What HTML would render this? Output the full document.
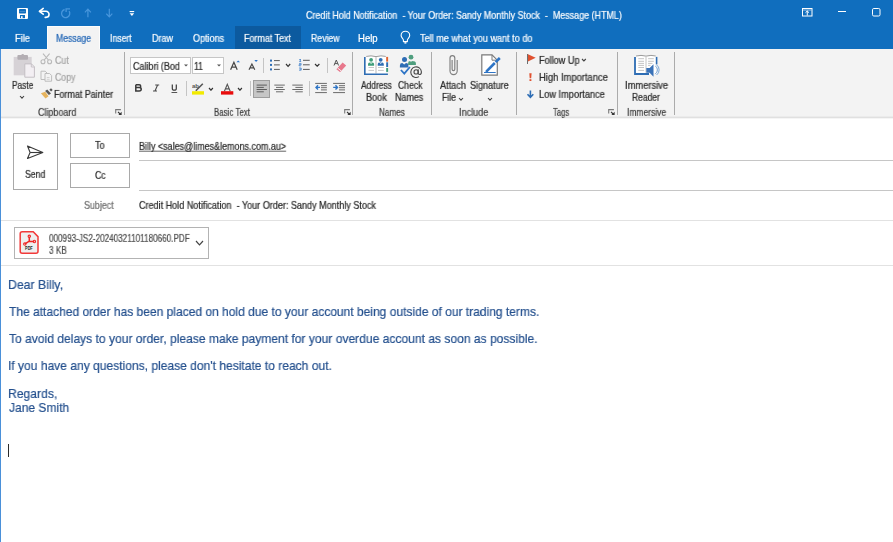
<!DOCTYPE html>
<html><head><meta charset="utf-8">
<style>
*{margin:0;padding:0;box-sizing:border-box}
html,body{width:893px;height:542px;overflow:hidden;background:#fff;font-family:"Liberation Sans",sans-serif}
.t{position:absolute;white-space:nowrap;line-height:1;transform-origin:0 0;will-change:transform;-webkit-text-stroke:0.2px currentColor}
.r{position:absolute;display:block}
</style></head><body>
<div class="r" style="left:0px;top:0px;width:893px;height:49px;background:#106ebe"></div>
<svg class="r" style="left:17px;top:8px" width="11" height="11" viewBox="0 0 11 11"><rect x="0" y="0" width="11" height="11" rx="1" fill="#fff"/><rect x="2" y="1" width="7" height="4.5" rx="0.8" fill="#106ebe"/><rect x="2.6" y="3" width="5.8" height="0.6" fill="#5a9ad6"/><rect x="3" y="7" width="5" height="3.2" fill="#106ebe"/><rect x="4" y="8.2" width="1.6" height="2" fill="#fff"/></svg>
<svg class="r" style="left:36px;top:5px" width="18" height="17" viewBox="0 0 18 17"><path d="M7.2 3.4L3.4 6.3L7.2 9.2" fill="none" stroke="#fff" stroke-width="1.6" stroke-linejoin="round" stroke-linecap="round"/><path d="M3.8 6.3H10A3.05 3.05 0 0 1 10 12.4H9.2" fill="none" stroke="#fff" stroke-width="1.6" stroke-linecap="round"/></svg>
<svg class="r" style="left:57px;top:5px" width="18" height="17" viewBox="0 0 18 17"><path d="M7.6 4.5A4.1 4.1 0 1 0 12.1 6.2" fill="none" stroke="#4896dc" stroke-width="1.3"/><path d="M9.1 7V3.9H13" fill="none" stroke="#4896dc" stroke-width="1.3"/></svg>
<svg class="r" style="left:84px;top:8px" width="8" height="10" viewBox="0 0 8 10"><path d="M3.9 9.2V1.3M0.9 4.3L3.9 1.2L6.9 4.3" fill="none" stroke="#4896dc" stroke-width="1.2"/></svg>
<svg class="r" style="left:106px;top:8px" width="8" height="10" viewBox="0 0 8 10"><path d="M3.3 0.8V8.7M0.3 5.7L3.3 8.8L6.3 5.7" fill="none" stroke="#4896dc" stroke-width="1.2"/></svg>
<svg class="r" style="left:129px;top:10px" width="6" height="7" viewBox="0 0 6 7"><rect x="0.6" y="1" width="4.6" height="1.1" fill="#fff"/><path d="M0.6 3.3H5.2L2.9 6.1Z" fill="#fff"/></svg>
<div class="t" style="left:306.30px;top:9.94px;font-size:9.5px;color:#fff;transform:scale(0.9405,1.07);">Credit Hold Notification&nbsp; - Your Order: Sandy Monthly Stock&nbsp; -&nbsp; Message (HTML)</div>
<svg class="r" style="left:801px;top:7px" width="12" height="10" viewBox="0 0 12 10"><rect x="1.5" y="1.5" width="9.5" height="7.5" fill="none" stroke="#fff" stroke-width="1"/><path d="M2 3H10.5" stroke="#cfe2f5" stroke-width="0.8"/><path d="M6.25 4V8.5M4.5 5.7L6.25 4L8 5.7" fill="none" stroke="#fff" stroke-width="1"/></svg>
<div class="r" style="left:838px;top:11px;width:8px;height:1px;background:#fff"></div>
<svg class="r" style="left:871px;top:7px" width="10" height="10" viewBox="0 0 10 10"><rect x="1.5" y="1.5" width="7.5" height="7.5" rx="1.3" fill="none" stroke="#fff" stroke-width="1"/></svg>
<div class="r" style="left:47px;top:26px;width:53px;height:23px;background:#f3f3f3;border:1px solid #fcfcfc;border-bottom:none"></div>
<div class="r" style="left:235px;top:26px;width:66px;height:23px;background:#0c5a9f"></div>
<div class="t" style="left:15.03px;top:32.94px;font-size:9.5px;color:#fff;transform:scale(0.9714,1.07);">File</div>
<div class="t" style="left:55.69px;top:32.94px;font-size:9.5px;color:#1c62b4;transform:scale(0.9081,1.07);">Message</div>
<div class="t" style="left:109.79px;top:32.94px;font-size:9.5px;color:#fff;transform:scale(0.9130,1.07);">Insert</div>
<div class="t" style="left:151.55px;top:32.94px;font-size:9.5px;color:#fff;transform:scale(0.9476,1.07);">Draw</div>
<div class="t" style="left:192.80px;top:32.94px;font-size:9.5px;color:#fff;transform:scale(0.9485,1.07);">Options</div>
<div class="t" style="left:243.96px;top:32.94px;font-size:9.5px;color:#fff;transform:scale(0.9408,1.07);">Format Text</div>
<div class="t" style="left:310.58px;top:32.94px;font-size:9.5px;color:#fff;transform:scale(0.9167,1.07);">Review</div>
<div class="t" style="left:358.49px;top:32.94px;font-size:9.5px;color:#fff;transform:scale(1.0056,1.07);">Help</div>
<svg class="r" style="left:396px;top:29px" width="18" height="17" viewBox="0 0 18 17"><path d="M7.4 12.6V11C7.4 9.6 5.1 8.7 5.1 6.5A4.3 4.3 0 0 1 13.7 6.5C13.7 8.7 11.4 9.6 11.4 11V12.6Z" fill="none" stroke="#fff" stroke-width="1.1" stroke-linejoin="round"/><rect x="8.4" y="13.2" width="2" height="1.4" fill="#fff"/></svg>
<div class="t" style="left:420.30px;top:32.94px;font-size:9.5px;color:#fff;transform:scale(0.9590,1.07);">Tell me what you want to do</div>
<div class="r" style="left:0px;top:49px;width:893px;height:67px;background:#f3f3f3"></div>
<div class="r" style="left:0px;top:116px;width:893px;height:1px;background:#ebebeb"></div>
<div class="r" style="left:0px;top:117px;width:893px;height:1px;background:#e0e0e0"></div>
<div class="r" style="left:0px;top:118px;width:893px;height:1px;background:#f5f5f5"></div>
<div class="r" style="left:0px;top:49px;width:1px;height:493px;background:#4a90d9"></div>
<div class="r" style="left:124px;top:52px;width:1px;height:63px;background:#ababab"></div>
<div class="r" style="left:352px;top:52px;width:1px;height:63px;background:#ababab"></div>
<div class="r" style="left:431px;top:52px;width:1px;height:63px;background:#ababab"></div>
<div class="r" style="left:516px;top:52px;width:1px;height:63px;background:#ababab"></div>
<div class="r" style="left:617px;top:52px;width:1px;height:63px;background:#ababab"></div>
<div class="r" style="left:674px;top:52px;width:1px;height:63px;background:#ababab"></div>
<svg class="r" style="left:12px;top:53px" width="24" height="26" viewBox="0 0 24 26"><rect x="1.7" y="3.9" width="18" height="18.4" fill="#d6d2d6"/><rect x="5.4" y="2" width="10.6" height="4.7" rx="1" fill="#b3aeb3"/><circle cx="10.7" cy="2.5" r="1.4" fill="#b3aeb3"/><path d="M12.8 10.9H19.5L22.4 13.8V24.2H12.8Z" fill="#f3eff3" stroke="#c4bfc4" stroke-width="1"/><path d="M19.3 10.9V14H22.4" fill="none" stroke="#c4bfc4" stroke-width="0.9"/></svg>
<div class="t" style="left:11.92px;top:79.94px;font-size:9.5px;color:#262626;transform:scale(0.8783,1.07);">Paste</div>
<svg class="r" style="left:19.2px;top:94.8px" width="6" height="4.2" viewBox="0 0 6 4.2"><path d="M1 1L3.0 3.2L5 1" fill="none" stroke="#444" stroke-width="1.1"/></svg>
<svg class="r" style="left:40px;top:53px" width="13" height="12" viewBox="0 0 13 12"><circle cx="3" cy="8.7" r="2" fill="none" stroke="#b9b9b9" stroke-width="1.1"/><circle cx="9.6" cy="8.7" r="2" fill="none" stroke="#b9b9b9" stroke-width="1.1"/><path d="M4.2 7L9.6 0.6M8.4 7L3 0.6" stroke="#b9b9b9" stroke-width="1.1"/></svg>
<div class="t" style="left:55.00px;top:54.94px;font-size:9.5px;color:#a3a3a3;transform:scale(0.9333,1.07);">Cut</div>
<svg class="r" style="left:40px;top:70px" width="13" height="12" viewBox="0 0 13 12"><path d="M1 1.2H5.2L7 3V9.5H1Z" fill="#f3f3f3" stroke="#bdbdbd" stroke-width="1"/><path d="M5 3.5H9.6L11.6 5.5V11.2H5Z" fill="#f3f3f3" stroke="#bdbdbd" stroke-width="1"/><path d="M6.8 7.5H9.6M6.8 9.3H9.6" stroke="#c9c9c9" stroke-width="0.8"/></svg>
<div class="t" style="left:55.00px;top:71.94px;font-size:9.5px;color:#a3a3a3;transform:scale(0.9182,1.07);">Copy</div>
<svg class="r" style="left:38px;top:85px" width="17" height="16" viewBox="0 0 17 16"><path d="M2.9 8.3L7.2 6.8L10.6 11.2L7.5 13.6Z" fill="#e6b45e"/><path d="M7.1 6.1L9.2 4.6L13 8.5L10.9 10Z" fill="#585858"/><path d="M11.4 4.7L13 3.3L14.7 5L13.1 6.6Z" fill="#555"/></svg>
<div class="t" style="left:54.06px;top:88.94px;font-size:9.5px;color:#262626;transform:scale(0.9403,1.07);">Format Painter</div>
<div class="t" style="left:37.60px;top:106.94px;font-size:9.5px;color:#3b3b3b;transform:scale(0.9400,1.07);">Clipboard</div>
<svg class="r" style="left:115px;top:108px" width="8" height="8" viewBox="0 0 8 8"><path d="M0.7 5.6V1.6H5.9" fill="none" stroke="#7a7a7a" stroke-width="1.1"/><path d="M3 3.9L5.6 6.5" stroke="#333" stroke-width="1.1"/><path d="M3.4 6.9H6.6V3.7Z" fill="#333"/></svg>
<div class="r" style="left:130px;top:57px;width:61px;height:17px;background:#fff;border:1px solid #c6c6c6"></div>
<div class="t" style="left:132.80px;top:60.94px;font-size:9.5px;color:#262626;transform:scale(0.9449,1.07);">Calibri (Bod</div>
<svg class="r" style="left:184px;top:64px" width="4" height="3" viewBox="0 0 4 3"><path d="M0 0.5H4L2 2.5Z" fill="#555"/></svg>
<div class="r" style="left:192px;top:57px;width:32px;height:17px;background:#fff;border:1px solid #c6c6c6"></div>
<div class="t" style="left:194.09px;top:60.94px;font-size:9.5px;color:#262626;transform:scale(0.9125,1.07);">11</div>
<svg class="r" style="left:217px;top:64px" width="4" height="3" viewBox="0 0 4 3"><path d="M0 0.5H4L2 2.5Z" fill="#555"/></svg>
<svg class="r" style="left:230px;top:59px" width="12" height="12" viewBox="0 0 12 12"><path d="M0.6 10.8L3.9 3.2L7.2 10.8M1.9 8.2H5.9" fill="none" stroke="#474747" stroke-width="1.25"/><path d="M6.4 3.2L8.2 1.5L10 3.2Z" fill="#2e75c6"/></svg>
<svg class="r" style="left:248px;top:59px" width="11" height="12" viewBox="0 0 11 12"><path d="M1 10.8L3.9 5L6.8 10.8M2 8.8H5.8" fill="none" stroke="#474747" stroke-width="1.15"/><path d="M6.3 1.1H9.9L8.1 2.9Z" fill="#2e75c6"/></svg>
<div class="r" style="left:263px;top:58px;width:1px;height:15px;background:#c4c4c4"></div>
<svg class="r" style="left:269px;top:59px" width="12" height="12" viewBox="0 0 12 12"><rect x="1" y="0.6" width="2" height="2" fill="#2e6db4"/><rect x="1" y="4.9" width="2" height="2" fill="#2e6db4"/><rect x="1" y="9.4" width="2" height="2" fill="#2e6db4"/><path d="M5 1.6H10.8M5 5.9H10.8M5 10.4H10.8" stroke="#5a5a5a" stroke-width="1"/></svg>
<svg class="r" style="left:285.2px;top:63.3px" width="6.2" height="4.3" viewBox="0 0 6.2 4.3"><path d="M1 1L3.1 3.3L5.2 1" fill="none" stroke="#333" stroke-width="1.2"/></svg>
<svg class="r" style="left:298px;top:58px" width="13" height="14" viewBox="0 0 13 14"><path d="M1.2 1.6H3M2.3 1.3V3.6M1.2 3.6H3.2M1 5.6H3.2V6.7H1V7.8H3.2M1 10H3.2V11.1H1.6M3.2 11.1V12.2H1" fill="none" stroke="#2e75c6" stroke-width="0.7"/><path d="M5 2.3H11.7M5 6.8H11.7M5 11.4H11.7" stroke="#5a5a5a" stroke-width="1"/></svg>
<svg class="r" style="left:314.3px;top:63.3px" width="6.4" height="4.2" viewBox="0 0 6.4 4.2"><path d="M1 1L3.2 3.2L5.4 1" fill="none" stroke="#333" stroke-width="1.2"/></svg>
<div class="r" style="left:327px;top:58px;width:1px;height:15px;background:#c4c4c4"></div>
<svg class="r" style="left:333px;top:59px" width="14" height="13" viewBox="0 0 14 13"><path d="M1 6.5L3.3 1L5.6 6.5M1.8 4.6H4.8" fill="none" stroke="#555" stroke-width="1"/><path d="M3.4 10.3L9.6 3.6L13.2 6.6L7.1 13.1Z" fill="#e8788c"/><path d="M4.6 9L8.3 12" stroke="#f3f3f3" stroke-width="1"/></svg>
<svg class="r" style="left:134px;top:84px" width="9" height="9" viewBox="0 0 9 9"><path d="M1.8 0.8H5.2C7.2 0.8 7.2 3.6 5.2 3.6H1.8M5.2 3.6C7.9 3.6 7.9 6.9 5.2 6.9H1.8V0.8" fill="none" stroke="#3a3a3a" stroke-width="1.5"/></svg>
<svg class="r" style="left:152px;top:84px" width="8" height="9" viewBox="0 0 8 9"><path d="M3.2 1H7.2M1 7H5M5.6 1L3 7" fill="none" stroke="#4a4a4a" stroke-width="1.1"/></svg>
<svg class="r" style="left:171px;top:84px" width="8" height="10" viewBox="0 0 8 10"><path d="M1.3 0.6V4.4C1.3 6.8 5.3 6.8 5.3 4.4V0.6" fill="none" stroke="#3a3a3a" stroke-width="1.2"/><path d="M0.5 8.5H6.2" stroke="#555" stroke-width="1"/></svg>
<div class="r" style="left:186px;top:81px;width:1px;height:15px;background:#c4c4c4"></div>
<svg class="r" style="left:192px;top:82px" width="13" height="13" viewBox="0 0 13 13"><text x="0" y="5.6" font-size="6" fill="#555" font-family="Liberation Sans" font-weight="bold">ab</text><path d="M3.8 8.8L10.8 1.8" stroke="#555" stroke-width="1.6"/><rect x="0" y="9.2" width="12" height="3.4" fill="#f2ea00"/></svg>
<svg class="r" style="left:208.2px;top:86.5px" width="5.9" height="4.2" viewBox="0 0 5.9 4.2"><path d="M1 1L2.95 3.2L4.9 1" fill="none" stroke="#333" stroke-width="1.2"/></svg>
<svg class="r" style="left:221px;top:83px" width="13" height="12" viewBox="0 0 13 12"><path d="M3.4 8.2L6.3 1.3L9.2 8.2M4.5 5.9H8.1" fill="none" stroke="#555" stroke-width="1.1"/><rect x="0" y="8.2" width="12.3" height="3.4" fill="#e80c0c"/></svg>
<svg class="r" style="left:237.4px;top:86.5px" width="5.9" height="4.2" viewBox="0 0 5.9 4.2"><path d="M1 1L2.95 3.2L4.9 1" fill="none" stroke="#333" stroke-width="1.2"/></svg>
<div class="r" style="left:250px;top:81px;width:1px;height:15px;background:#c4c4c4"></div>
<div class="r" style="left:253px;top:80px;width:17px;height:18px;background:#c6c6c6;border:1px solid #9d9d9d"></div>
<svg class="r" style="left:256px;top:84px" width="12" height="9" viewBox="0 0 12 9"><path d="M0.6 1.1H10.9M0.6 3.4H7.8M0.6 5.5H10.9M0.6 7.8H7.8" stroke="#5c5c5c" stroke-width="1"/></svg>
<svg class="r" style="left:274px;top:84px" width="12" height="9" viewBox="0 0 12 9"><path d="M0.3 1.1H10.8M2 3.4H9.2M0.3 5.5H10.8M2 7.8H9.2" stroke="#6a6a6a" stroke-width="1"/></svg>
<svg class="r" style="left:292px;top:84px" width="12" height="9" viewBox="0 0 12 9"><path d="M0.3 1.1H10.8M3.4 3.4H10.8M0.3 5.5H10.8M3.4 7.8H10.8" stroke="#6a6a6a" stroke-width="1"/></svg>
<div class="r" style="left:309px;top:81px;width:1px;height:15px;background:#c4c4c4"></div>
<svg class="r" style="left:315px;top:82px" width="13" height="12" viewBox="0 0 13 12"><path d="M0.2 1.4H11.9M6 3.7H11.9M6 5.7H11.9M6 7.9H11.9M0.2 10.6H11.9" stroke="#6a6a6a" stroke-width="1"/><path d="M1 5.4H5M3 3.3L1 5.4L3 7.5" fill="none" stroke="#2e75c6" stroke-width="1.4"/></svg>
<svg class="r" style="left:333px;top:82px" width="13" height="12" viewBox="0 0 13 12"><path d="M0.1 1.4H12M6 3.7H12M6 5.7H12M6 7.9H12M0.1 10.6H12" stroke="#6a6a6a" stroke-width="1"/><path d="M0.2 5.4H4.4M2.5 3.3L4.5 5.4L2.5 7.5" fill="none" stroke="#2e75c6" stroke-width="1.4"/></svg>
<div class="t" style="left:213.97px;top:106.94px;font-size:9.5px;color:#3b3b3b;transform:scale(0.8333,1.07);">Basic Text</div>
<svg class="r" style="left:343.5px;top:107.5px" width="8" height="8" viewBox="0 0 8 8"><path d="M0.7 5.6V1.6H5.9" fill="none" stroke="#7a7a7a" stroke-width="1.1"/><path d="M3 3.9L5.6 6.5" stroke="#333" stroke-width="1.1"/><path d="M3.4 6.9H6.6V3.7Z" fill="#333"/></svg>
<svg class="r" style="left:364px;top:55px" width="25" height="21" viewBox="0 0 25 21"><rect x="2" y="0.6" width="20.2" height="18.4" fill="#fff"/><path d="M2.2 1.4Q7 0.2 12 1.6Q17 0.2 21.8 1.4" fill="none" stroke="#999" stroke-width="1"/><path d="M12 1.8V18.5" stroke="#b9b9b9" stroke-width="1"/><path d="M0.8 1.9V19.2H23.9" fill="none" stroke="#2e6db4" stroke-width="1.6"/><circle cx="7.1" cy="4.8" r="1.9" fill="#3f9e7a"/><path d="M4 10.7V9.4Q4 7.2 7.1 7.2Q10.1 7.2 10.1 9.4V10.7Z" fill="#3f9e7a"/><path d="M6.1 7.3L7.1 8.6L8.1 7.3" fill="none" stroke="#fff" stroke-width="0.8"/><circle cx="16.7" cy="4.8" r="1.9" fill="#2e6db4"/><path d="M13.7 10.7V9.4Q13.7 7.2 16.7 7.2Q19.8 7.2 19.8 9.4V10.7Z" fill="#2e6db4"/><path d="M15.7 7.3L16.7 8.6L17.7 7.3" fill="none" stroke="#fff" stroke-width="0.8"/><path d="M4.5 12.5H10M4.5 15.4H10M14 12.5H19.8M14 15.4H19.8" stroke="#c8c8c8" stroke-width="1"/><rect x="22.2" y="1.9" width="1.9" height="4.7" fill="#e0612f"/><rect x="22.2" y="7.3" width="1.9" height="4.7" fill="#2e6db4"/><rect x="22.2" y="13" width="1.9" height="3.9" fill="#3f9e7a"/></svg>
<div class="t" style="left:361.00px;top:80.14px;font-size:9.5px;color:#262626;transform:scale(0.8857,1.07);">Address</div>
<div class="t" style="left:365.84px;top:92.14px;font-size:9.5px;color:#262626;transform:scale(0.9619,1.07);">Book</div>
<svg class="r" style="left:396px;top:52px" width="30" height="28" viewBox="0 0 30 28"><circle cx="15" cy="5.2" r="2.4" fill="#4f9e7e"/><path d="M12.1 12.9V11.2Q12.1 9 14.2 9L15 10.2L15.8 9Q19.9 9 19.9 11.2V12.9Z" fill="#4f9e7e"/><circle cx="8.5" cy="7.5" r="2.5" fill="#2e6db4"/><path d="M3.9 15.5V13.4Q3.9 11.1 6.3 11.1L8.2 12.6L10 11.1Q12.4 11.1 12.4 13.4V15.5Z" fill="#2e6db4"/><path d="M4.9 18L8.3 21.6L13.9 15" fill="none" stroke="#2e75c6" stroke-width="1.8"/><circle cx="20.1" cy="19.9" r="2.1" fill="none" stroke="#4a4a4a" stroke-width="1.1"/><path d="M22.2 17.3V21Q22.2 22.5 23.5 22.5Q25.4 22.5 25.4 19.9A5.3 5.3 0 1 0 23 24.6" fill="none" stroke="#4a4a4a" stroke-width="1.1"/></svg>
<div class="t" style="left:397.80px;top:80.14px;font-size:9.5px;color:#262626;transform:scale(0.9074,1.07);">Check</div>
<div class="t" style="left:395.36px;top:92.14px;font-size:9.5px;color:#262626;transform:scale(0.9414,1.07);">Names</div>
<div class="t" style="left:379.14px;top:106.94px;font-size:9.5px;color:#3b3b3b;transform:scale(0.8586,1.07);">Names</div>
<svg class="r" style="left:444px;top:52px" width="16" height="26" viewBox="0 0 16 26"><path d="M13.2 8V19A3.6 3.6 0 0 1 6 19V6A2.4 2.4 0 0 1 10.8 6V17.2A1.35 1.35 0 0 1 8.1 17.2V8" fill="none" stroke="#7f7f7f" stroke-width="1.15"/></svg>
<div class="t" style="left:440.00px;top:80.14px;font-size:9.5px;color:#262626;transform:scale(0.9630,1.07);">Attach</div>
<div class="t" style="left:442.09px;top:92.14px;font-size:9.5px;color:#262626;transform:scale(0.9143,1.07);">File</div>
<svg class="r" style="left:457.5px;top:96.8px" width="6" height="4.2" viewBox="0 0 6 4.2"><path d="M1 1L3.0 3.2L5 1" fill="none" stroke="#444" stroke-width="1.1"/></svg>
<svg class="r" style="left:478px;top:52px" width="26" height="26" viewBox="0 0 26 26"><path d="M3.8 2.9H14L19.3 8.2V23.1H3.8Z" fill="#fff" stroke="#7a7a7a" stroke-width="1.2"/><path d="M14 2.9V8.2H19.3" fill="none" stroke="#7a7a7a" stroke-width="1"/><path d="M6 20.5H17.7" stroke="#2e75c6" stroke-width="1"/><path d="M8.5 19.3L16.8 11" stroke="#2e75c6" stroke-width="2.6"/><path d="M17.6 10.2L21.8 6" stroke="#2e75c6" stroke-width="2.6"/><path d="M7.3 20.4L7.9 18.3L9.5 19.9Z" fill="#2e75c6"/></svg>
<div class="t" style="left:470.05px;top:80.14px;font-size:9.5px;color:#262626;transform:scale(0.9487,1.07);">Signature</div>
<svg class="r" style="left:486.5px;top:96.5px" width="6" height="4.2" viewBox="0 0 6 4.2"><path d="M1 1L3.0 3.2L5 1" fill="none" stroke="#444" stroke-width="1.1"/></svg>
<div class="t" style="left:458.74px;top:106.94px;font-size:9.5px;color:#3b3b3b;transform:scale(0.9586,1.07);">Include</div>
<div class="r" style="left:527px;top:54px;width:1px;height:10px;background:#6e6e6e"></div>
<svg class="r" style="left:528px;top:54px" width="8" height="8" viewBox="0 0 8 8"><path d="M0 0.2L7.7 3.8L0 7.4Z" fill="#e0512f"/></svg>
<div class="t" style="left:538.54px;top:54.94px;font-size:9.5px;color:#262626;transform:scale(0.9610,1.07);">Follow Up</div>
<svg class="r" style="left:581px;top:58.3px" width="5.8" height="4" viewBox="0 0 5.8 4"><path d="M1 1L2.9 3L4.8 1" fill="none" stroke="#444" stroke-width="1.1"/></svg>
<svg class="r" style="left:529px;top:73px" width="3" height="8" viewBox="0 0 3 8"><path d="M0.3 0.2H2.6L2.2 5.2H0.7Z" fill="#e0512f"/><rect x="0.5" y="6.2" width="1.9" height="1.8" fill="#e0512f"/></svg>
<div class="t" style="left:538.51px;top:71.94px;font-size:9.5px;color:#262626;transform:scale(0.9882,1.07);">High Importance</div>
<svg class="r" style="left:526px;top:90px" width="9" height="9" viewBox="0 0 9 9"><path d="M4.4 0.5V7M1.5 4.3L4.4 7.3L7.3 4.3" fill="none" stroke="#2e6db4" stroke-width="1.6"/></svg>
<div class="t" style="left:538.53px;top:88.94px;font-size:9.5px;color:#262626;transform:scale(0.9742,1.07);">Low Importance</div>
<div class="t" style="left:553.00px;top:106.94px;font-size:9.5px;color:#3b3b3b;transform:scale(0.8100,1.07);">Tags</div>
<svg class="r" style="left:608px;top:108px" width="8" height="8" viewBox="0 0 8 8"><path d="M0.7 5.6V1.6H5.9" fill="none" stroke="#7a7a7a" stroke-width="1.1"/><path d="M3 3.9L5.6 6.5" stroke="#333" stroke-width="1.1"/><path d="M3.4 6.9H6.6V3.7Z" fill="#333"/></svg>
<svg class="r" style="left:630px;top:52px" width="30" height="27" viewBox="0 0 30 27"><rect x="5.9" y="3.4" width="20" height="18" fill="#fff"/><path d="M6 4Q11 2.7 16 4.1Q21 2.7 25.8 4" fill="none" stroke="#999" stroke-width="1"/><path d="M16 4.3V20.8" stroke="#c4c4c4" stroke-width="1"/><path d="M5 4.9V22H19" fill="none" stroke="#2e6db4" stroke-width="1.8"/><path d="M26.6 4.9V12.4" stroke="#2e6db4" stroke-width="1.6"/><path d="M8.3 6.7H14M8.3 9.3H14M8.3 11.4H14M8.3 13.4H14M8.3 15.5H14M8.3 18.4H14M18.1 6.7H23.8M18.1 9.3H23.8M18.1 11.4H22.5M18.1 13.4H20.5" stroke="#bdbdbd" stroke-width="0.9"/><path d="M16.3 16H19.6L23.5 12.2V24.8L19.6 20.7H16.3Z" fill="#3a72b8"/><path d="M25.2 14A4.5 4.5 0 0 1 25.2 21.8M26.6 12.8A6.4 6.4 0 0 1 26.6 23" fill="none" stroke="#6d9fd6" stroke-width="0.9"/></svg>
<div class="t" style="left:624.52px;top:80.14px;font-size:9.5px;color:#262626;transform:scale(0.9833,1.07);">Immersive</div>
<div class="t" style="left:632.11px;top:92.14px;font-size:9.5px;color:#262626;transform:scale(0.8900,1.07);">Reader</div>
<div class="t" style="left:626.51px;top:106.94px;font-size:9.5px;color:#3b3b3b;transform:scale(0.8929,1.07);">Immersive</div>
<div class="r" style="left:13px;top:133px;width:45px;height:57px;background:#fff;border:1px solid #a9a9a9"></div>
<svg class="r" style="left:22px;top:140px" width="28" height="25" viewBox="0 0 28 25"><path d="M5.5 6L20.8 12.5L5.5 18.5L8.1 12.5Z" fill="none" stroke="#3a3a3a" stroke-width="1.1" stroke-linejoin="round"/><path d="M8.1 12.5H20.8" stroke="#3a3a3a" stroke-width="1.1"/></svg>
<div class="t" style="left:24.69px;top:168.94px;font-size:9.5px;color:#262626;transform:scale(0.9143,1.07);">Send</div>
<div class="r" style="left:70px;top:133px;width:60px;height:25px;background:#fff;border:1px solid #a9a9a9"></div>
<div class="t" style="left:95.00px;top:139.94px;font-size:9.5px;color:#262626;transform:scale(0.9500,1.07);">To</div>
<div class="r" style="left:70px;top:163px;width:60px;height:25px;background:#fff;border:1px solid #a9a9a9"></div>
<div class="t" style="left:94.60px;top:170.04px;font-size:9.5px;color:#262626;transform:scale(0.9273,1.07);">Cc</div>
<div class="t" style="left:139.00px;top:140.94px;font-size:9.5px;color:#262626;transform:scale(0.9436,1.07);text-decoration:underline;text-decoration-skip-ink:none;text-decoration-thickness:1px;text-decoration-color:#6a6a6a">Billy &lt;sales@limes&amp;lemons.com.au&gt;</div>
<div class="r" style="left:139px;top:160px;width:754px;height:1px;background:#c6c6c6"></div>
<div class="r" style="left:139px;top:190px;width:754px;height:1px;background:#c6c6c6"></div>
<div class="t" style="left:83.76px;top:199.94px;font-size:9.5px;color:#6b6b6b;transform:scale(0.9387,1.07);">Subject</div>
<div class="t" style="left:139.00px;top:199.94px;font-size:9.5px;color:#262626;transform:scale(0.9526,1.07);">Credit Hold Notification&nbsp; - Your Order: Sandy Monthly Stock</div>
<div class="r" style="left:1px;top:220px;width:892px;height:1px;background:#e2e2e2"></div>
<div class="r" style="left:14px;top:227px;width:195px;height:32px;background:#fff;border:1px solid #b3b3b3"></div>
<svg class="r" style="left:16px;top:228px" width="28" height="30" viewBox="0 0 28 30"><path d="M6.2 3.8H17.2L22 8.6V23.2A2 2 0 0 1 20 25.2H6.2A2 2 0 0 1 4.2 23.2V5.8A2 2 0 0 1 6.2 3.8Z" fill="#efefef" stroke="#f23a3a" stroke-width="1.5"/><path d="M13.3 9.2V13.2L9.4 15.7M13.3 13.2L17.6 13.4" fill="none" stroke="#f02626" stroke-width="1.5" stroke-linecap="round"/><circle cx="13.3" cy="8.3" r="1.2" fill="none" stroke="#f02626" stroke-width="1.1"/><circle cx="8.8" cy="16.1" r="1.2" fill="none" stroke="#f02626" stroke-width="1.1"/><circle cx="18.4" cy="13.5" r="1.2" fill="none" stroke="#f02626" stroke-width="1.1"/><text x="9.1" y="22" font-size="4.6" font-weight="bold" fill="#1e1e1e" font-family="Liberation Sans" textLength="7.6" lengthAdjust="spacingAndGlyphs">PDF</text></svg>
<div class="t" style="left:48.70px;top:232.94px;font-size:9.5px;color:#4b4b4b;transform:scale(0.8555,1.07);">000993-JS2-20240321101180660.PDF</div>
<div class="t" style="left:48.70px;top:244.94px;font-size:9.5px;color:#4b4b4b;transform:scale(0.8650,1.07);">3 KB</div>
<svg class="r" style="left:195px;top:239.8px" width="9" height="5.8" viewBox="0 0 9 5.8"><path d="M1 1L4.5 4.8L8 1" fill="none" stroke="#444" stroke-width="1.2"/></svg>
<div class="r" style="left:1px;top:265px;width:892px;height:1px;background:#e2e2e2"></div>
<div class="t" style="left:7.96px;top:278.00px;font-size:13px;color:#24508e;transform:scaleX(0.9446);">Dear Billy,</div>
<div class="t" style="left:8.90px;top:305.00px;font-size:13px;color:#24508e;transform:scaleX(0.9241);">The attached order has been placed on hold due to your account being outside of our trading terms.</div>
<div class="t" style="left:8.50px;top:332.00px;font-size:13px;color:#24508e;transform:scaleX(0.9283);">To avoid delays to your order, please make payment for your overdue account as soon as possible.</div>
<div class="t" style="left:8.07px;top:359.00px;font-size:13px;color:#24508e;transform:scaleX(0.9268);">If you have any questions, please don&#39;t hesitate to reach out.</div>
<div class="t" style="left:8.07px;top:387.00px;font-size:13px;color:#24508e;transform:scaleX(0.9333);">Regards,</div>
<div class="t" style="left:8.70px;top:401.00px;font-size:13px;color:#24508e;transform:scaleX(0.9250);">Jane Smith</div>
<div class="r" style="left:8px;top:444px;width:1.4px;height:13px;background:#2a2a2a"></div>
</body></html>
